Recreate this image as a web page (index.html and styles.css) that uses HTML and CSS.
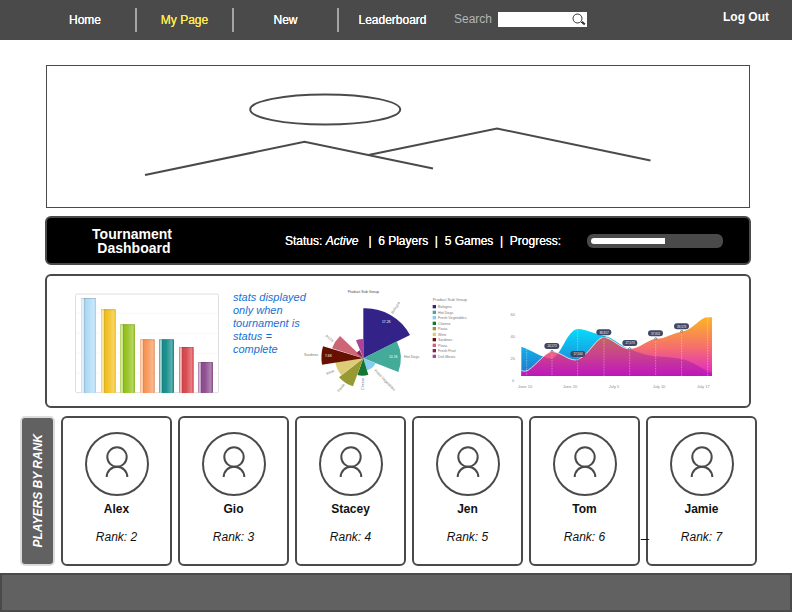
FILE: index.html
```html
<!DOCTYPE html>
<html lang="en">
<head>
<meta charset="utf-8">
<title>Tournament Dashboard</title>
<link rel="stylesheet" href="styles.css">
</head>
<body>
<svg class="defs" aria-hidden="true">
  <symbol id="avatar" viewBox="0 0 64 64">
    <g fill="none" stroke="#4a4a4a" stroke-width="2">
      <circle cx="32" cy="32" r="31"/>
      <circle cx="32" cy="25" r="9.7"/>
      <path d="M21.7 45a10.3 10.3 0 0 1 20.6 0"/>
    </g>
  </symbol>
</svg>

<header class="topbar">
  <nav class="menu">
    <a href="#">Home</a>
    <a href="#" class="current">My Page</a>
    <a href="#">New</a>
    <a href="#">Leaderboard</a>
  </nav>
  <form class="search">
    <label for="q">Search</label>
    <span class="field">
      <input id="q" type="search">
      <button type="button" aria-label="Search">
        <svg viewBox="0 0 14 14" width="14" height="14" fill="none" stroke="#333"><circle cx="5.5" cy="5.5" r="4.5"/><path d="M9 9l1.5 1.5"/><path d="M9.8 8.8l3 2.8" stroke-width="2"/></svg>
      </button>
    </span>
  </form>
  <a href="#" class="logout">Log Out</a>
</header>

<main>
  <div class="banner">
    <svg viewBox="0 0 702 141" fill="none" stroke="#4a4a4a" stroke-width="2">
      <ellipse cx="278.200" cy="43.500" rx="75" ry="15"/>
      <path d="M98 109L257.500 75.800L386 102.500M321.500 89L450 62.500L603.500 94.500"/>
    </svg>
  </div>

  <section class="dashboard">
    <h1>Tournament<br>&nbsp;Dashboard</h1>
    <p class="status">Status: <em>Active</em>   |  6 Players  |  5 Games  |  <label for="progress">Progress:</label></p>
    <progress id="progress" value="58" max="100"></progress>
  </section>

  <section class="stats">
    <svg viewBox="105 30 432 360">
      <defs>
        <linearGradient id="sheen">
          <stop offset="0" stop-color="#fff" stop-opacity=".1"/>
          <stop offset=".08" stop-color="#fff" stop-opacity=".65"/>
          <stop offset=".2" stop-color="#fff" stop-opacity=".45"/>
          <stop offset=".24" stop-color="#000" stop-opacity=".08"/>
          <stop offset=".45" stop-color="#fff" stop-opacity="0"/>
          <stop offset=".85" stop-color="#fff" stop-opacity=".3"/>
          <stop offset=".93" stop-color="#fff" stop-opacity=".1"/>
          <stop offset="1" stop-color="#000" stop-opacity=".15"/>
        </linearGradient>
      </defs>
      <g fill="none" stroke="#f4f4f4" stroke-width="2"><path d="M108 130h427M108 190h427M108 250h427M108 310h427"/></g>
      <rect x="106.500" y="72" width="429" height="296" rx="5" fill="none" stroke="#dedede" stroke-width="3"/>
      <g>
        <rect x="123" y="84" width="45" height="285" rx="3" fill="#b2dcf6"/>
        <rect x="183" y="118" width="44" height="251" rx="3" fill="#f3c225"/>
        <rect x="240" y="163" width="45" height="206" rx="3" fill="#98c422"/>
        <rect x="300" y="208" width="44" height="161" rx="3" fill="#f8985a"/>
        <rect x="357" y="208" width="45" height="161" rx="3" fill="#178f8d"/>
        <rect x="417" y="231" width="44" height="138" rx="3" fill="#d9494d"/>
        <rect x="474" y="276" width="45" height="93" rx="3" fill="#8e4f90"/>
      </g>
      <g fill="url(#sheen)">
        <rect x="123" y="84" width="45" height="285" rx="3"/>
        <rect x="183" y="118" width="44" height="251" rx="3"/>
        <rect x="240" y="163" width="45" height="206" rx="3"/>
        <rect x="300" y="208" width="44" height="161" rx="3"/>
        <rect x="357" y="208" width="45" height="161" rx="3"/>
        <rect x="417" y="231" width="44" height="138" rx="3"/>
        <rect x="474" y="276" width="45" height="93" rx="3"/>
      </g>
      <g fill="#000" fill-opacity=".14">
        <path d="M124 84h43v3h-43zM184 118h42v3h-42zM241 163h43v3h-43zM301 208h42v3h-42zM358 208h43v3h-43zM418 231h42v3h-42zM475 276h43v3h-43z"/>
      </g>
    </svg>

    <p class="note">stats displayed only when tournament is status = complete</p>

    <svg class="pie" viewBox="24 0 576 360">
      <path fill="#332288" d="M190 235V85A152 152 0 0 1 330 165z"/>
      <path fill="#44aa99" d="M190 235L290 184A113 113 0 0 1 295 276z"/>
      <path fill="#88ccee" d="M190 235L227 250A40 40 0 0 1 201 271z"/>
      <path fill="#117733" d="M190 235L205 284A52 52 0 0 1 172 285z"/>
      <path fill="#999933" d="M190 235L159 319A90 90 0 0 1 117 292z"/>
      <path fill="#ddcc77" d="M190 235L124 286A84 84 0 0 1 106 247z"/>
      <path fill="#661100" d="M190 235L66 254A126 126 0 0 1 69 199z"/>
      <path fill="#cc6677" d="M190 235L96 205A100 100 0 0 1 120 168z"/>
      <path fill="#882255" d="M190 235L170 219A26 26 0 0 1 179 211z"/>
      <path fill="#aa4499" d="M190 235L168 181A58 58 0 0 1 190 177z"/>
      <g class="tiny">
        <text x="143" y="39" class="caption">Product Sub Group</text>
        <text transform="translate(279 102) rotate(-58)">Bologna</text>
        <text x="312" y="233">Hot Dogs</text>
        <text transform="translate(222 272) rotate(46)">Fresh Vegetables</text>
        <text transform="translate(191 330) rotate(-90)">Cheese</text>
        <text transform="translate(117 337) rotate(-52)">Pasta</text>
        <text transform="translate(81 285) rotate(-24)">Wine</text>
        <text x="12" y="227">Sardines</text>
        <text transform="translate(75 170) rotate(35)">Pizza</text>
        <g class="value">
          <text x="246" y="129">17.2K</text>
          <text x="267" y="234">14.1K</text>
          <text x="75" y="231">7.6K</text>
        </g>
        <text x="398" y="63" class="heading">Product Sub Group</text>
        <text x="414" y="84">Bologna</text>
        <text x="414" y="101">Hot Dogs</text>
        <text x="414" y="117">Fresh Vegetables</text>
        <text x="414" y="134">Cheese</text>
        <text x="414" y="150">Pasta</text>
        <text x="414" y="167">Wine</text>
        <text x="414" y="183">Sardines</text>
        <text x="414" y="200">Pizza</text>
        <text x="414" y="216">Fresh Fruit</text>
        <text x="414" y="233">Deli Meats</text>
      </g>
      <path fill="#332288" d="M398 75h10v10h-10z"/>
      <path fill="#44aa99" d="M398 92h10v10h-10z"/>
      <path fill="#88ccee" d="M398 108h10v10h-10z"/>
      <path fill="#117733" d="M398 125h10v10h-10z"/>
      <path fill="#999933" d="M398 141h10v10h-10z"/>
      <path fill="#ddcc77" d="M398 158h10v10h-10z"/>
      <path fill="#661100" d="M398 174h10v10h-10z"/>
      <path fill="#cc6677" d="M398 191h10v10h-10z"/>
      <path fill="#882255" d="M398 207h10v10h-10z"/>
      <path fill="#aa4499" d="M398 224h10v10h-10z"/>
    </svg>

    <svg class="area" viewBox="0 -60 630 360">
      <defs>
        <linearGradient id="blue" gradientUnits="userSpaceOnUse" x1="0" y1="85" x2="0" y2="228">
          <stop offset="0" stop-color="#06dcfb"/><stop offset="1" stop-color="#2470cc"/>
        </linearGradient>
        <linearGradient id="warm" gradientUnits="userSpaceOnUse" x1="0" y1="52" x2="0" y2="228">
          <stop offset="0" stop-color="#fdb425"/><stop offset=".5" stop-color="#f5716b"/><stop offset=".85" stop-color="#e53bb0"/><stop offset="1" stop-color="#d522b8"/>
        </linearGradient>
        <linearGradient id="overlap" gradientUnits="userSpaceOnUse" x1="0" y1="107" x2="0" y2="228">
          <stop offset="0" stop-color="#c4695f"/><stop offset=".5" stop-color="#c9418f"/><stop offset="1" stop-color="#bd16bd"/>
        </linearGradient>
        <clipPath id="front"><path d="M34 212Q44 216 54 211C82 192 105 158 125 154C155 156 180 188 206 178C240 160 260 112 281 112C305 112 330 146 359 147C390 146 410 120 437 116C465 117 485 100 515 95C550 90 570 52 592 52H606V228H34z"/></clipPath>
      </defs>
      <path fill="url(#blue)" d="M34 140C65 150 95 174 125 176C155 168 170 90 203 87C232 88 255 103 281 107C312 112 330 138 359 147C390 160 410 166 437 169C465 172 490 172 515 177C550 184 575 208 606 219V228H34z"/>
      <path fill="url(#warm)" d="M34 212Q44 216 54 211C82 192 105 158 125 154C155 156 180 188 206 178C240 160 260 112 281 112C305 112 330 146 359 147C390 146 410 120 437 116C465 117 485 100 515 95C550 90 570 52 592 52H606V228H34z"/>
      <path clip-path="url(#front)" fill="url(#overlap)" d="M34 140C65 150 95 174 125 176C155 168 170 90 203 87C232 88 255 103 281 107C312 112 330 138 359 147C390 160 410 166 437 169C465 172 490 172 515 177C550 184 575 208 606 219V228H34z"/>
      <path fill="none" stroke="#fff" stroke-opacity=".75" stroke-width="3" d="M34 212Q44 216 54 211C82 192 105 158 125 154C155 156 180 188 206 178C240 160 260 112 281 112C305 112 330 146 359 147"/>
      <path fill="none" stroke="#fff" stroke-opacity=".5" stroke-width="2" stroke-dasharray="5 3" d="M50 148V228M126 156V228M203 90V228M282 112V228M359 147V228M437 116V228M515 95V228M593 54V228"/>
      <g fill="#fff" stroke="#3d4768" stroke-width="2">
        <circle cx="126" cy="154" r="3"/><circle cx="204" cy="179" r="3"/><circle cx="282" cy="112" r="3"/><circle cx="359" cy="146" r="3"/><circle cx="437" cy="116" r="3"/><circle cx="515" cy="94" r="3"/>
      </g>
      <g fill="#3d4768">
        <rect x="103" y="129" width="45" height="18" rx="9"/>
        <rect x="181" y="153" width="45" height="18" rx="9"/>
        <rect x="259" y="88" width="45" height="18" rx="9"/>
        <rect x="337" y="120" width="45" height="18" rx="9"/>
        <rect x="414" y="91" width="45" height="18" rx="9"/>
        <rect x="492" y="70" width="45" height="18" rx="9"/>
      </g>
      <g class="tags">
        <text x="126" y="142">24,573</text>
        <text x="204" y="166">17,500</text>
        <text x="282" y="101">38,917</text>
        <text x="360" y="133">27,573</text>
        <text x="437" y="104">37,812</text>
        <text x="515" y="83">39,573</text>
      </g>
      <g class="axis">
        <text x="8" y="48">60</text><text x="8" y="114">40</text><text x="8" y="180">20</text><text x="9" y="247">0</text>
        <text x="45" y="263">June 10</text><text x="180" y="263">June 20</text><text x="312" y="263">July 5</text><text x="447" y="263">July 10</text><text x="580" y="263">July 17</text>
      </g>
    </svg>
  </section>
</main>

<section class="players">
  <h2><span>PLAYERS BY RANK</span></h2>
  <article><svg class="avatar"><use href="#avatar"/></svg><h3>Alex</h3><p>Rank: 2</p></article>
  <article><svg class="avatar"><use href="#avatar"/></svg><h3>Gio</h3><p>Rank: 3</p></article>
  <article><svg class="avatar"><use href="#avatar"/></svg><h3>Stacey</h3><p>Rank: 4</p></article>
  <article><svg class="avatar"><use href="#avatar"/></svg><h3>Jen</h3><p>Rank: 5</p></article>
  <article><svg class="avatar"><use href="#avatar"/></svg><h3>Tom</h3><p>Rank: 6</p></article>
  <article><svg class="avatar"><use href="#avatar"/></svg><h3>Jamie</h3><p>Rank: 7</p><span class="mark">_</span></article>
</section>

<footer></footer>
</body>
</html>
```
FILE: styles.css
```css
* { box-sizing: border-box; }

body {
  margin: 0;
  min-height: 100vh;
  display: flex;
  flex-direction: column;
  background: #fff;
  color: #111;
  font: 12px/14px "Liberation Sans", Arial, sans-serif;
}

h1, h2, h3, p { margin: 0; font-size: 12px; }
a { text-decoration: none; }
svg { display: block; }
.defs { position: absolute; width: 0; height: 0; }

.topbar {
  display: grid;
  grid-template-columns: 419fr 133px 205fr;
  height: 40px;
  padding-left: 35px;
  background: #4a4a4a;
}

.menu {
  display: grid;
  grid-template-columns: 102fr 97fr 105fr 107fr 8fr;
  align-items: center;
}
.menu a {
  padding: 5px 0;
  border-right: 2px solid #a5a5a5;
  color: #fff;
  text-align: center;
  text-shadow: 0 0 0 currentColor;
}
.menu a:last-child { border-right: 0; }
.menu .current { color: #ffe94a; }

.search {
  display: flex;
  align-items: center;
  justify-content: space-between;
  height: 38px;
  color: #b4b4b4;
}
.field { display: flex; width: 89px; height: 15px; background: #fff; }
.field input {
  flex: 1;
  min-width: 0;
  padding: 0 2px;
  border: 0;
  outline: 0;
  background: none;
  font: inherit;
}
.field button { padding: 1px; border: 0; background: none; }

.logout {
  padding: 10px 23px 0 0;
  color: #fff;
  font-weight: bold;
  text-align: right;
}

main { padding: 25px 41px 0 45px; }

.banner { margin: 0 1px; border: 1px solid #4a4a4a; }

.dashboard {
  display: grid;
  grid-template-columns: 170fr 68fr 302px 136px 26px;
  align-items: center;
  height: 49px;
  margin-top: 8px;
  border: 2px solid #4a4a4a;
  border-radius: 6px;
  background: #000;
  color: #fff;
}
.dashboard h1 { font-size: 14px; line-height: 14px; text-align: center; }
.status {
  grid-column: 3;
  white-space: pre;
  text-shadow: 0 0 0 currentColor;
}

progress {
  width: 100%;
  height: 14px;
  padding: 4px;
  border: 0;
  border-radius: 6px;
  background: #4a4a4a;
  appearance: none;
}
progress::-webkit-progress-bar { background: #4a4a4a; }
progress::-webkit-progress-value { border-radius: 3px 0 0 3px; background: #fff; }

.stats {
  display: grid;
  grid-template-columns: 144fr 14px 75px 192fr 10px 210fr;
  margin-top: 9px;
  padding: 4px 29px 6px 28px;
  border: 2px solid #4a4a4a;
  border-radius: 6px;
}
.stats svg { width: 100%; overflow: visible; }
.note {
  grid-column: 3;
  padding-top: 11px;
  color: #1371d6;
  font-size: 11px;
  font-style: italic;
  line-height: 13px;
}
.area { grid-column: 6; }

.tiny { font-size: 11px; fill: #777; }
.tiny .caption { font-size: 11px; fill: #444; }
.tiny .heading { font-size: 12px; }
.tiny .value { font-size: 10px; fill: #fff; }
.tags { font-size: 9px; fill: #fff; text-anchor: middle; }
.axis { font-size: 12px; fill: #8a8a8a; text-anchor: middle; }

.players {
  display: grid;
  grid-template-columns: 35px repeat(6, 1fr);
  gap: 6px;
  margin-top: 8px;
  padding: 0 35px 0 20px;
}
.players h2 {
  display: flex;
  align-items: center;
  justify-content: center;
  border: 2px solid #dcdcdc;
  border-radius: 5px;
  background: #616161;
  color: #fff;
  font-style: italic;
}
.players h2 span { writing-mode: vertical-rl; transform: rotate(180deg); }
.players article {
  position: relative;
  padding: 14px 0 20px;
  border: 2px solid #4a4a4a;
  border-radius: 6px;
  text-align: center;
}
.avatar { width: 64px; height: 64px; margin: 0 auto 6px; }
.players h3 { margin-bottom: 14px; }
.players p { font-style: italic; }
.mark {
  position: absolute;
  left: -7px;
  bottom: 25px;
  font-size: 14px;
}

footer {
  flex: 1;
  min-height: 39px;
  margin-top: 7px;
  border: 2px solid #4a4a4a;
  background: #616161;
}
```
